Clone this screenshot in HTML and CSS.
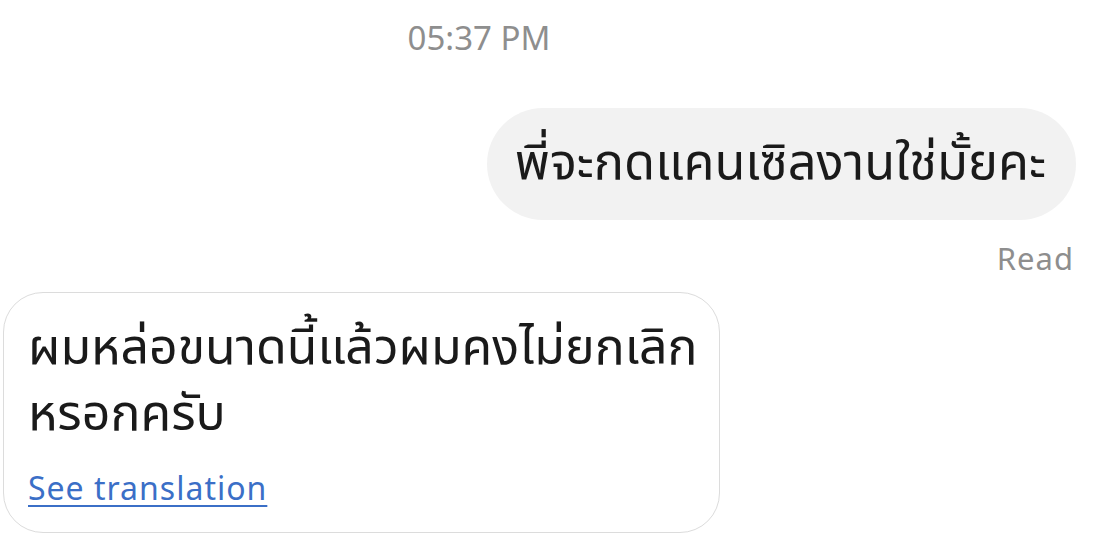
FILE: index.html
```html
<!DOCTYPE html>
<html lang="th">
<head>
<meta charset="utf-8">
<link rel="stylesheet" href="styles.css">
</head>
<body>
<div class="chat">
  <div class="time">05:37 PM</div>
  <div class="row out">
    <div class="bubble sent">พี่จะกดแคนเซิลงานใช่มั้ยคะ</div>
  </div>
  <div class="status">Read</div>
  <div class="row in">
    <div class="bubble recv">
      <div class="msg">ผมหล่อขนาดนี้แล้วผมคงไม่ยกเลิก<br>หรอกครับ</div>
      <a class="translate" href="#">See translation</a>
    </div>
  </div>
</div>
</body>
</html>
```

FILE: styles.css
```css
html, body {
  margin: 0;
  padding: 0;
  background: #ffffff;
}
body {
  font-family: "Noto Sans", "Noto Sans Thai", "Noto Sans Thai UI", sans-serif;
  width: 1100px;
  height: 544px;
  overflow: hidden;
}
.chat {
  display: flex;
  flex-direction: column;
  padding: 16px 24px 0 3px;
}
.time {
  text-align: center;
  padding-right: 121px;
  font-size: 33px;
  line-height: 44px;
  color: #8e8e8e;
}
.row {
  display: flex;
}
.row.out {
  justify-content: flex-end;
  margin-top: 48px;
}
.bubble {
  box-sizing: border-box;
}
.sent {
  background: #f2f2f2;
  border-radius: 56px;
  height: 112px;
  padding: 0 30px 0 28px;
  display: flex;
  align-items: center;
  font-size: 50.5px;
  color: #1a1a1a;
}
.status {
  align-self: flex-end;
  margin-top: 18px;
  margin-right: 2px;
  font-size: 31px;
  letter-spacing: 1px;
  line-height: 40px;
  color: #8e8e8e;
}
.row.in {
  margin-top: 14px;
}
.recv {
  width: 717px;
  border: 1.5px solid #dcdcdc;
  border-radius: 40px;
  padding: 19px 20px 22px 24px;
}
.msg {
  font-size: 50px;
  line-height: 66px;
  color: #1a1a1a;
  white-space: nowrap;
}
.translate {
  display: inline-block;
  margin-top: 22px;
  font-size: 32px;
  letter-spacing: 1px;
  line-height: 44px;
  color: #3b6fc7;
  text-decoration: underline;
  text-decoration-thickness: 2px;
  text-underline-offset: 5px;
}
```
